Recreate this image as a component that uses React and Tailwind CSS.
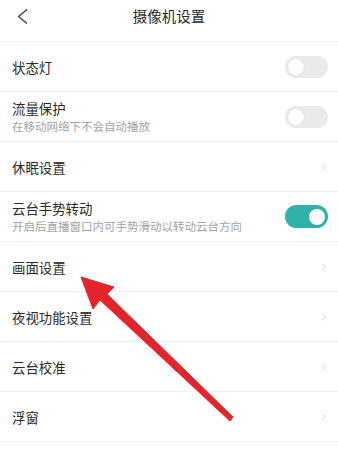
import { ChevronRight } from "lucide-react";

const rows = [
  { title: "状态灯", type: "toggle", on: false },
  { title: "流量保护", sub: "在移动网络下不会自动播放", type: "toggle", on: false },
  { title: "休眠设置", type: "link" },
  { title: "云台手势转动", sub: "开启后直播窗口内可手势滑动以转动云台方向", type: "toggle", on: true },
  { title: "画面设置", type: "link" },
  { title: "夜视功能设置", type: "link" },
  { title: "云台校准", type: "link" },
  { title: "浮窗", type: "link" },
];

const Toggle = ({ on }) => (
  <div
    className={
      on
        ? "flex h-[23px] w-[43px] items-center justify-end rounded-full bg-[#2fb2ac] px-[3px]"
        : "flex h-[22px] w-[43px] items-center justify-start rounded-full bg-[#eaeaea] px-[3px]"
    }
  >
    <div className="h-[16px] w-[16px] rounded-full bg-white shadow-[0_0_1px_rgba(0,0,0,0.15)]" />
  </div>
);

const CameraSettings = () => {
  return (
    <div
      className="relative h-[468px] w-[338px] overflow-hidden bg-white"
      style={{ fontFamily: '"Noto Sans CJK SC", "Noto Sans", sans-serif' }}
    >
      <header className="relative flex h-[42px] items-center justify-center border-b border-[#f4f4f4]">
        <svg className="absolute left-0 top-0" width="40" height="32" viewBox="0 0 40 32">
          <polyline points="27,9.5 18.5,16.5 27,23.5" fill="none" stroke="#333" strokeWidth="1.2" />
        </svg>
        <p className="-mt-[10px] text-[14.5px] text-[#2a2a2a]">摄像机设置</p>
      </header>

      <main>
        {rows.map((row) => (
          <div
            key={row.title}
            className="flex h-[50px] items-center justify-between border-b border-[#f2f2f2] pl-[12px] pr-[10px]"
          >
            <div className="flex flex-col">
              <p className="text-[13.4px] leading-[18px] text-[#2a2a2a]">{row.title}</p>
              {row.sub && <p className="mt-[1px] text-[11.5px] leading-[16px] text-[#a3a3a3]">{row.sub}</p>}
            </div>
            {row.type === "toggle" ? (
              <Toggle on={row.on} />
            ) : (
              <ChevronRight className="-mr-[2px] h-[12px] w-[12px] text-[#bdbdbd]" strokeWidth={1.4} />
            )}
          </div>
        ))}
      </main>

      <svg className="pointer-events-none absolute left-0 top-0" width="338" height="468" viewBox="0 0 338 468">
        <polygon
          points="81,277 114,287 107,294 233,417 230,421 100,300 93,309"
          fill="#e3242b"
          strokeLinejoin="round"
          stroke="#e3242b"
          strokeWidth="1"
        />
      </svg>
    </div>
  );
};

export default CameraSettings;
